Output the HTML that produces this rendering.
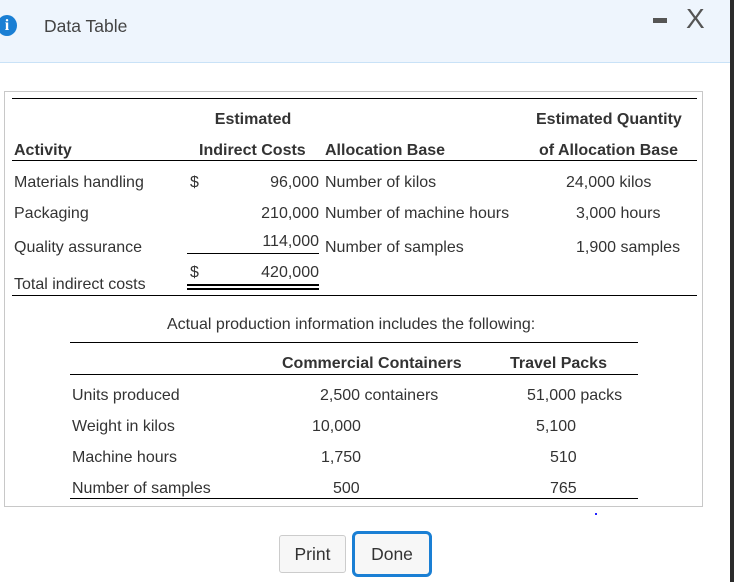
<!DOCTYPE html>
<html><head><style>
body{margin:0;width:734px;height:582px;background:#fff;position:relative;overflow:hidden;font-family:"Liberation Sans",Arial,sans-serif;font-size:16px;color:#333}
.t{position:absolute;line-height:18px;white-space:nowrap;margin-top:1px}
.b{font-weight:bold}
.r{text-align:right}
.c{text-align:center}
.l{position:absolute;height:1px;background:#000}
</style></head><body>
<div style="position:absolute;left:0;top:0;width:730px;height:62px;background:#eef5fd;border-bottom:1px solid #c9e2f7"></div>
<div style="position:absolute;left:730px;top:0;width:4px;height:582px;background:#2b2b2b"></div>
<div style="position:absolute;left:-3px;top:15px;width:20px;height:21px;border-radius:50%;background:#1a7fd4;color:#fff;font:bold 16px 'Liberation Serif',serif;text-align:center;line-height:22px">i</div>
<div class="t" style="left:44px;top:15px;font-size:17.5px;line-height:20px;color:#444">Data Table</div>
<div style="position:absolute;left:653px;top:18px;width:14px;height:5px;background:#555"></div>
<div class="t" style="left:686px;top:4px;font-size:28px;line-height:28px;color:#555">X</div>

<div style="position:absolute;left:4px;top:91px;width:699px;height:416px;border:1px solid #c8c8c8;box-sizing:border-box"></div>
<div class="l" style="left:12px;top:98px;width:685px"></div>

<div class="t b c" style="left:193px;top:110px;width:120px">Estimated</div>
<div class="t b" style="left:536px;top:110px">Estimated Quantity</div>
<div class="t b" style="left:14px;top:141px">Activity</div>
<div class="t b" style="left:199px;top:141px">Indirect Costs</div>
<div class="t b" style="left:325px;top:141px">Allocation Base</div>
<div class="t b" style="left:539px;top:141px">of Allocation Base</div>
<div class="l" style="left:12px;top:160px;width:685px"></div>

<div class="t" style="left:14px;top:173px">Materials handling</div>
<div class="t" style="left:190px;top:173px">$</div>
<div class="t r" style="left:220px;top:173px;width:99px">96,000</div>
<div class="t" style="left:325px;top:173px">Number of kilos</div>
<div class="t" style="left:566px;top:173px">24,000 kilos</div>

<div class="t" style="left:14px;top:204px">Packaging</div>
<div class="t r" style="left:220px;top:204px;width:99px">210,000</div>
<div class="t" style="left:325px;top:204px">Number of machine hours</div>
<div class="t" style="left:576px;top:204px">3,000 hours</div>

<div class="t" style="left:14px;top:238px">Quality assurance</div>
<div class="t r" style="left:220px;top:232px;width:99px">114,000</div>
<div class="t" style="left:325px;top:238px">Number of samples</div>
<div class="t" style="left:576px;top:238px">1,900 samples</div>
<div class="l" style="left:187px;top:253px;width:132px"></div>

<div class="t" style="left:190px;top:263px">$</div>
<div class="t r" style="left:220px;top:263px;width:99px">420,000</div>
<div class="t" style="left:14px;top:275px">Total indirect costs</div>
<div class="l" style="left:187px;top:284px;width:132px;height:2px"></div>
<div class="l" style="left:187px;top:288px;width:132px;height:2px"></div>
<div class="l" style="left:12px;top:295px;width:685px"></div>

<div class="t" style="left:167px;top:315px">Actual production information includes the following:</div>
<div class="l" style="left:70px;top:342px;width:568px"></div>
<div class="t b" style="left:282px;top:354px">Commercial Containers</div>
<div class="t b" style="left:510px;top:354px">Travel Packs</div>
<div class="l" style="left:70px;top:374px;width:568px"></div>

<div class="t" style="left:72px;top:386px">Units produced</div>
<div class="t" style="left:320px;top:386px">2,500 containers</div>
<div class="t" style="left:527px;top:386px">51,000 packs</div>
<div class="t" style="left:72px;top:417px">Weight in kilos</div>
<div class="t" style="left:312px;top:417px">10,000</div>
<div class="t" style="left:536px;top:417px">5,100</div>
<div class="t" style="left:72px;top:448px">Machine hours</div>
<div class="t" style="left:321px;top:448px">1,750</div>
<div class="t" style="left:550px;top:448px">510</div>
<div class="t" style="left:72px;top:479px">Number of samples</div>
<div class="t" style="left:333px;top:479px">500</div>
<div class="t" style="left:550px;top:479px">765</div>
<div class="l" style="left:70px;top:498px;width:568px"></div>
<div style="position:absolute;left:595px;top:513px;width:2px;height:2px;background:#22f"></div>

<div style="position:absolute;left:279px;top:535px;width:67px;height:38px;box-sizing:border-box;border:1px solid #ccc;border-radius:3px;background:#f7f7f7;text-align:center;line-height:36px;font-size:17.5px">Print</div>
<div style="position:absolute;left:352px;top:531px;width:80px;height:46px;box-sizing:border-box;border:3px solid #1a7fd4;border-radius:6px;background:#f7f7f7;text-align:center;line-height:40px;font-size:17.5px">Done</div>
</body></html>
